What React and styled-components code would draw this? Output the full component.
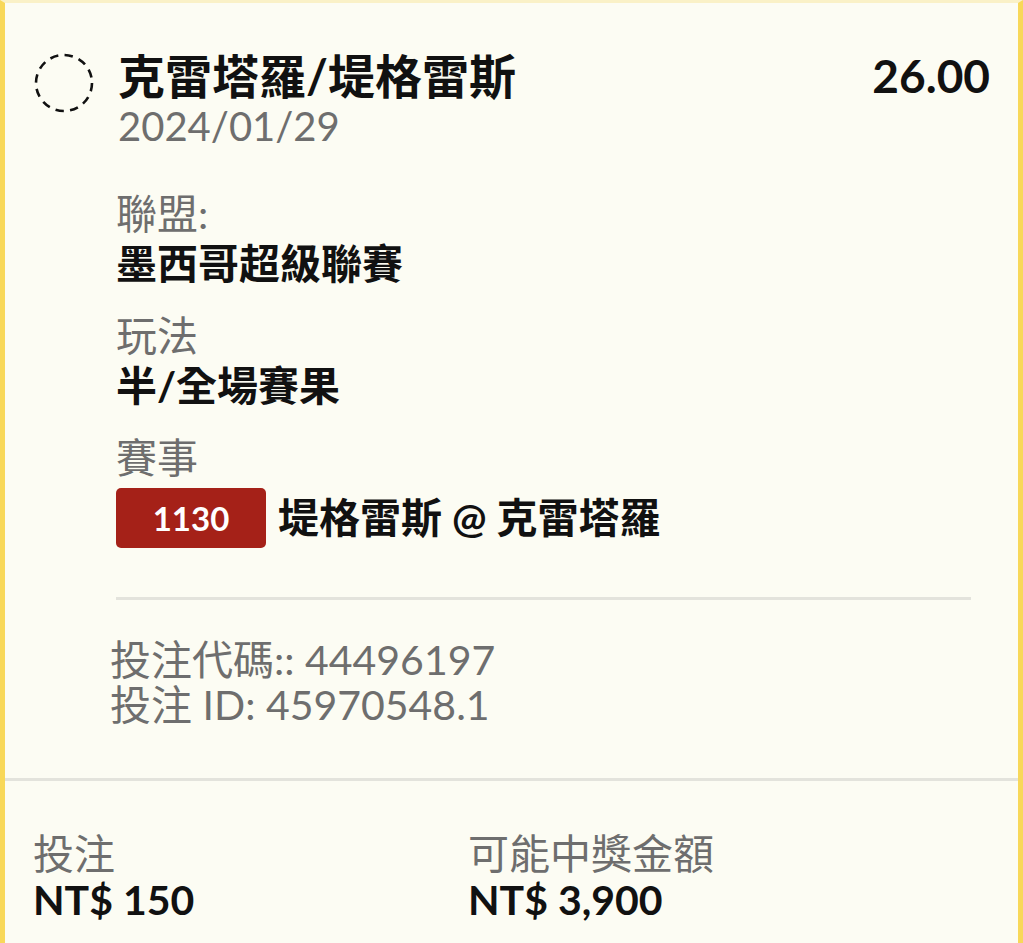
import styled, { createGlobalStyle } from "styled-components";

const GlobalStyle = createGlobalStyle`
  html, body {
    margin: 0;
    padding: 0;
    background: #fcfcf3;
    overflow: hidden;
  }
  body {
    font-family: Lato, "Noto Sans CJK TC", "Noto Sans", sans-serif;
    color: #111;
  }
`;

const Card = styled.div`
  box-sizing: border-box;
  min-height: 100vh;
  background: #fcfcf3;
  border-top: 3px solid #faf1c7;
  border-left: 5px solid #f8d859;
  border-right: 5px solid #f8d859;
`;

const TopSection = styled.section`
  padding: 48px 28px 51px 28px;
`;

const Header = styled.div`
  display: grid;
  grid-template-columns: 85px 1fr auto;
  align-items: start;
`;

const StatusIcon = styled.svg`
  width: 62px;
  height: 62px;
  margin-top: 1px;
`;

const TitleBlock = styled.div`
  display: flex;
  flex-direction: column;
`;

const Title = styled.div`
  font-size: 47px;
  font-weight: 700;
  line-height: 50px;
`;

const DateText = styled.div`
  font-size: 40px;
  line-height: 50px;
  color: #6e6e6e;
`;

const Odds = styled.div`
  font-size: 46px;
  font-weight: 700;
  line-height: 50px;
`;

const Body = styled.div`
  margin: 38px 19px 0 83px;
`;

const Field = styled.div`
  margin-bottom: 22px;
`;

const Label = styled.div`
  font-size: 41px;
  line-height: 50px;
  color: #6e6e6e;
`;

const Value = styled.div`
  font-size: 41px;
  font-weight: 700;
  line-height: 50px;
`;

const EventRow = styled.div`
  display: flex;
  align-items: center;
  gap: 12px;
  margin-top: 5px;
`;

const Badge = styled.span`
  display: inline-flex;
  align-items: center;
  justify-content: center;
  width: 150px;
  height: 60px;
  border-radius: 5px;
  background: #a52118;
  color: #fff;
  font-size: 33px;
  font-weight: 700;
`;

const Divider = styled.hr`
  border: none;
  height: 3px;
  background: #e3e3dc;
  margin: ${(p) => p.$margin || "0"};
`;

const Refs = styled.div`
  margin-left: -6px;
  font-size: 41px;
  line-height: 45px;
  color: #6e6e6e;
`;

const Summary = styled.section`
  display: grid;
  grid-template-columns: 435px 1fr;
  padding: 50px 28px 20px 28px;
`;

const SumLabel = styled.div`
  font-size: 41px;
  line-height: 46px;
  color: #6e6e6e;
`;

const SumValue = styled.div`
  font-size: 41px;
  font-weight: 700;
  line-height: 46px;
`;

const DashedCircle = () => (
  <StatusIcon viewBox="0 0 62 62">
    <circle
      cx="31"
      cy="31"
      r="28"
      fill="none"
      stroke="#111"
      strokeWidth="2.6"
      strokeDasharray="8.4 6.3"
    />
  </StatusIcon>
);

const fields = [
  { label: "聯盟:", value: "墨西哥超級聯賽" },
  { label: "玩法", value: "半/全場賽果" },
];

export default function App() {
  return (
    <>
      <GlobalStyle />
      <Card>
        <TopSection>
          <Header>
            <DashedCircle />
            <TitleBlock>
              <Title>克雷塔羅/堤格雷斯</Title>
              <DateText>2024/01/29</DateText>
            </TitleBlock>
            <Odds>26.00</Odds>
          </Header>

          <Body>
            {fields.map((f) => (
              <Field key={f.label}>
                <Label>{f.label}</Label>
                <Value>{f.value}</Value>
              </Field>
            ))}
            <Label>賽事</Label>
            <EventRow>
              <Badge>1130</Badge>
              <Value>堤格雷斯 @ 克雷塔羅</Value>
            </EventRow>

            <Divider $margin="49px 0 37px 0" />

            <Refs>
              <div>投注代碼:: 44496197</div>
              <div>投注 ID: 45970548.1</div>
            </Refs>
          </Body>
        </TopSection>

        <Divider />

        <Summary>
          <div>
            <SumLabel>投注</SumLabel>
            <SumValue>NT$ 150</SumValue>
          </div>
          <div>
            <SumLabel>可能中獎金額</SumLabel>
            <SumValue>NT$ 3,900</SumValue>
          </div>
        </Summary>
      </Card>
    </>
  );
}
